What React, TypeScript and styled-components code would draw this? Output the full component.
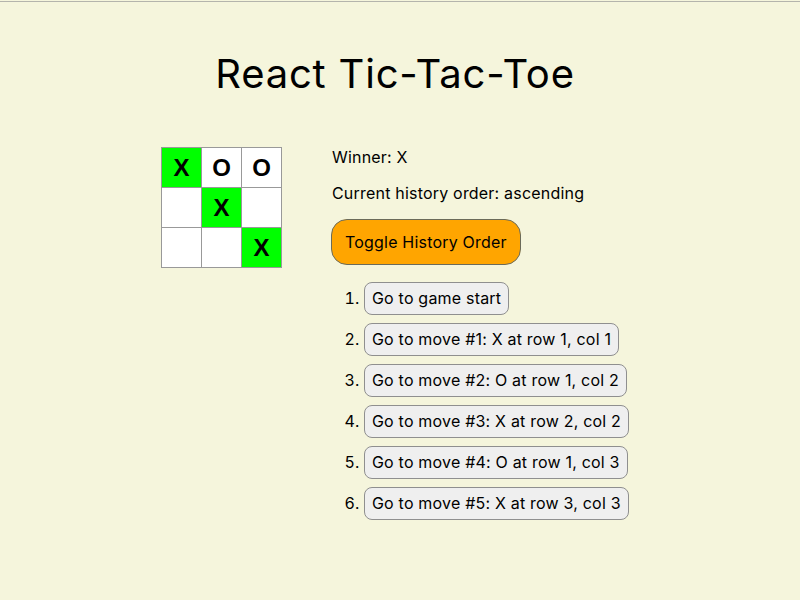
import React from "react";
import styled, { createGlobalStyle } from "styled-components";

const Global = createGlobalStyle`
  html, body {
    margin: 0;
    padding: 0;
    background: #f5f5dc;
  }
  body {
    font-family: Inter, "Noto Sans", sans-serif;
    color: #000;
  }
`;

const Page = styled.div`
  border-top: 1px solid #b4b4ac;
  margin-top: 1px;
  min-height: 598px;
  box-sizing: border-box;
`;

const Title = styled.h1`
  margin: 0;
  padding: 50px 10px 0 0;
  text-align: center;
  font-size: 40px;
  letter-spacing: 0.8px;
  font-weight: 400;
  line-height: 44px;
`;

const Game = styled.div`
  display: flex;
  justify-content: center;
  align-items: flex-start;
  gap: 50px;
  margin-top: 51px;
  padding-right: 10px;
`;

const Board = styled.div`
  display: grid;
  grid-template-columns: repeat(3, 40px);
  grid-auto-rows: 40px;
  padding: 0 1px 1px 0;
`;

const Square = styled.button<{ $win?: boolean }>`
  width: 41px;
  height: 41px;
  margin: 0;
  padding: 0;
  border: 1px solid #999;
  background: ${(p) => (p.$win ? "#00ff00" : "#fff")};
  font-family: "Liberation Sans", Arial, sans-serif;
  font-size: 24px;
  font-weight: bold;
  line-height: 39px;
  color: #000;
  text-align: center;
`;

const Info = styled.div`
  display: flex;
  flex-direction: column;
  align-items: flex-start;
  letter-spacing: 0.2px;
`;

const Line = styled.div`
  font-size: 16px;
  line-height: 20px;
  margin-bottom: 16px;
`;

const ToggleButton = styled.button`
  font-family: Inter, "Noto Sans", sans-serif;
  font-size: 16px;
  letter-spacing: 0.2px;
  line-height: 20px;
  padding: 12px 13px;
  background: #ffa500;
  color: #000;
  border: 1px solid #6b6b5a;
  border-radius: 16px;
  margin-left: -1px;
`;

const Moves = styled.ol`
  margin: 17px 0 0 0;
  padding-left: 32px;
  font-size: 16px;
`;

const Move = styled.li`
  margin-bottom: 8px;
  line-height: 19px;
`;

const MoveButton = styled.button`
  font-family: Inter, "Noto Sans", sans-serif;
  font-size: 16px;
  letter-spacing: 0.2px;
  line-height: 19px;
  padding: 6px 7px;
  background: #efefef;
  color: #000;
  border: 1px solid #8f8f8f;
  border-radius: 8px;
`;

const squares: (string | null)[] = ["X", "O", "O", null, "X", null, null, null, "X"];
const winLine = [0, 4, 8];

const moves = [
  "Go to game start",
  "Go to move #1: X at row 1, col 1",
  "Go to move #2: O at row 1, col 2",
  "Go to move #3: X at row 2, col 2",
  "Go to move #4: O at row 1, col 3",
  "Go to move #5: X at row 3, col 3",
];

export default function App() {
  return (
    <>
      <Global />
      <Page>
        <Title>React Tic-Tac-Toe</Title>
        <Game>
          <Board>
            {squares.map((s, i) => (
              <Square key={i} $win={winLine.includes(i)}>
                {s}
              </Square>
            ))}
          </Board>
          <Info>
            <Line>Winner: X</Line>
            <Line>Current history order: ascending</Line>
            <ToggleButton>Toggle History Order</ToggleButton>
            <Moves>
              {moves.map((m) => (
                <Move key={m}>
                  <MoveButton>{m}</MoveButton>
                </Move>
              ))}
            </Moves>
          </Info>
        </Game>
      </Page>
    </>
  );
}
